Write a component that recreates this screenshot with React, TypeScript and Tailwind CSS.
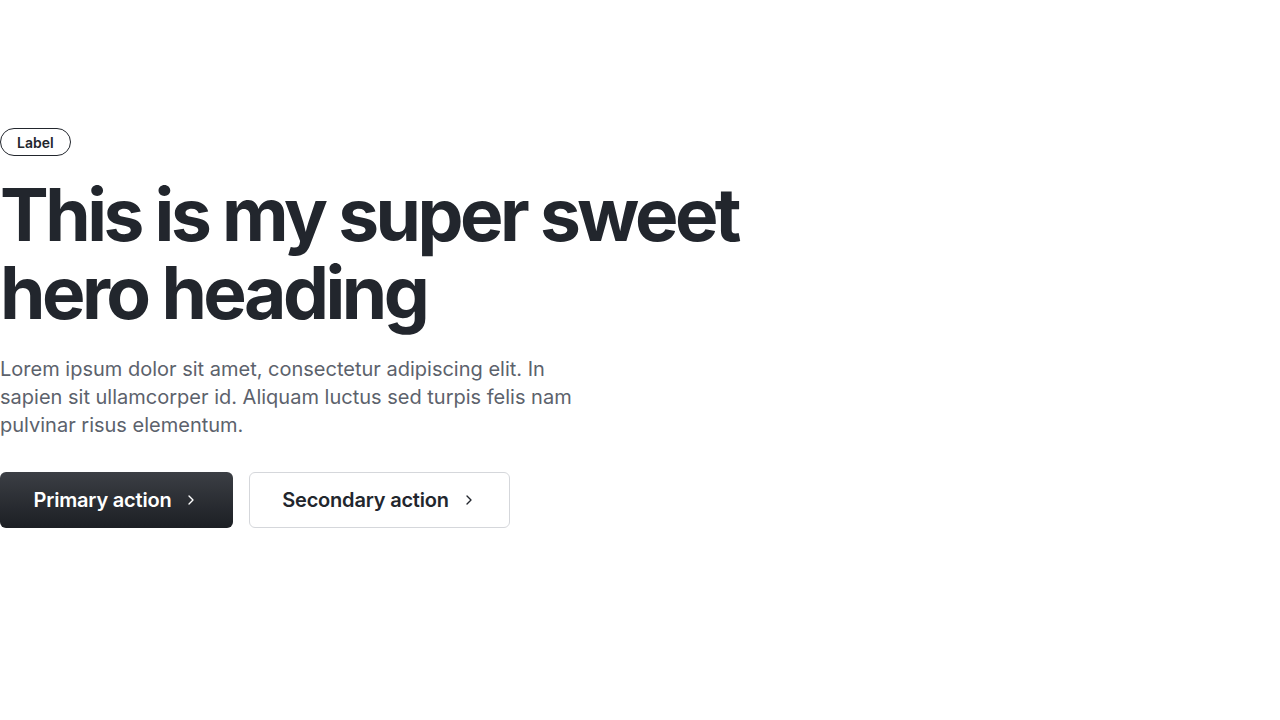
import { ChevronRight } from "lucide-react";

const App = () => {
  return (
    <div className="min-h-screen w-full bg-white pt-[128px] font-['Inter',sans-serif] text-[#22262d]">
      <div className="flex flex-col items-start">
        {/* label pill */}
        <span className="inline-flex h-[28px] items-center rounded-full border border-[#22262d] px-[16px] text-[14px] font-semibold">
          Label
        </span>

        {/* heading */}
        <h1 className="mt-[20px] max-w-[760px] text-[73px] font-bold leading-[78px] tracking-[-0.048em]">
          This is my super sweet hero heading
        </h1>

        <p className="mt-[23px] max-w-[590px] text-[20px] leading-[28px] text-[#5c626c]">
          Lorem ipsum dolor sit amet, consectetur adipiscing elit. In sapien sit ullamcorper id. Aliquam luctus sed turpis felis nam pulvinar risus elementum.
        </p>

        <div className="mt-[33px] flex gap-4">
          <button className="flex h-[56px] w-[233px] items-center justify-center gap-3 rounded-md bg-gradient-to-b from-[#3c3f45] to-[#1c1f24] text-[20px] font-semibold tracking-[-0.01em] text-white">
            Primary action
            <ChevronRight size={16} strokeWidth={2} />
          </button>
          <button className="flex h-[56px] w-[261px] items-center justify-center gap-3 rounded-md border border-[#d5d7db] bg-white text-[20px] font-semibold tracking-[-0.01em] text-[#22262d]">
            Secondary action
            <ChevronRight size={16} strokeWidth={2} />
          </button>
        </div>
      </div>
    </div>
  );
};

export default App;
